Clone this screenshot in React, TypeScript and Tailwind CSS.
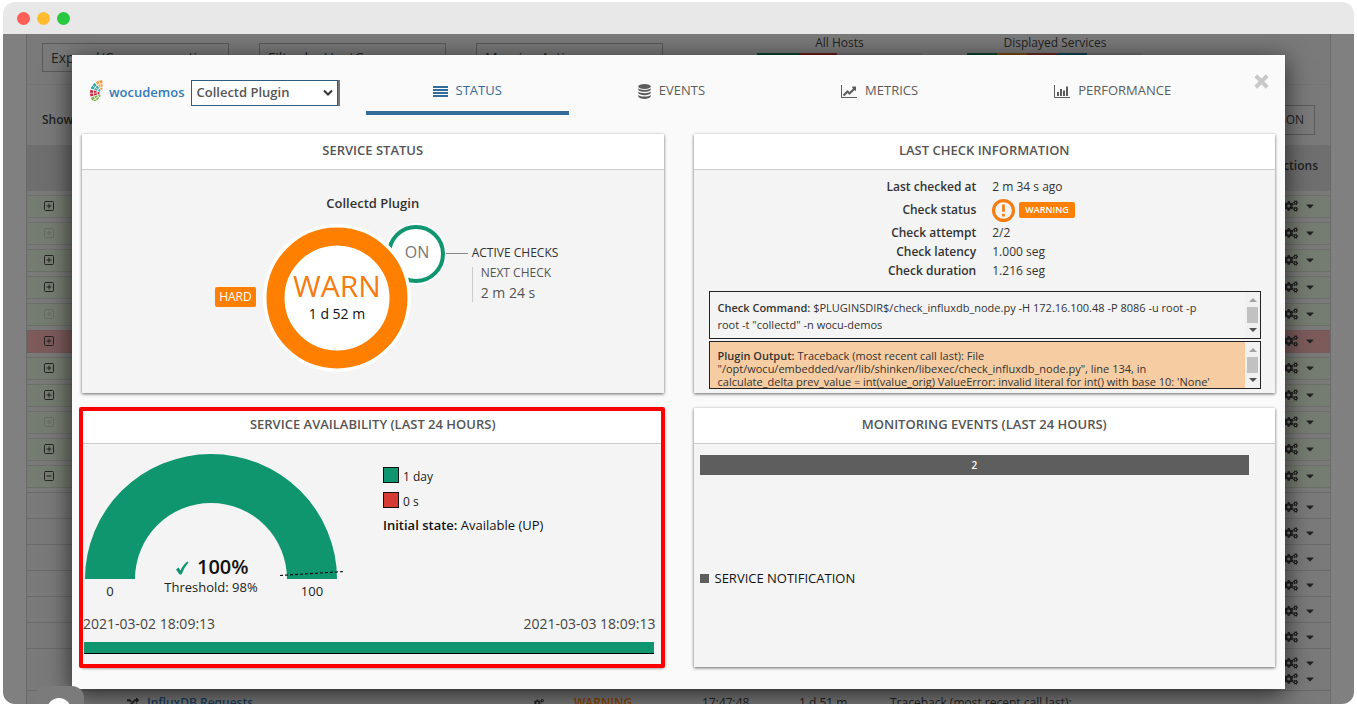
import React, { useState } from "react";
import { FaCaretDown, FaCogs, FaRandom } from "react-icons/fa";
import { LuSquareMinus, LuSquarePlus } from "react-icons/lu";

type RowState = "ok" | "muted" | "critical" | "open";

const HOST_ROWS: RowState[] = [
  "ok",
  "muted",
  "ok",
  "ok",
  "muted",
  "critical",
  "ok",
  "ok",
  "muted",
  "ok",
  "open",
];

const TABS = ["STATUS", "EVENTS", "METRICS", "PERFORMANCE"];

const CHECK_INFO = [
  { label: "Check attempt", value: "2/2" },
  { label: "Check latency", value: "1.000 seg" },
  { label: "Check duration", value: "1.216 seg" },
];

// Start angle of each logo sector, clockwise from 3 o'clock
const LOGO_SECTORS = [
  { color: "#7ab648", start: 128 },
  { color: "#c9283e", start: 164 },
  { color: "#2aa5a8", start: 200 },
  { color: "#f0a04b", start: 236 },
];

export default function App() {
  return (
    <div className="h-screen overflow-hidden bg-white px-[3px] py-0.5 font-['Open_Sans','Noto_Sans',sans-serif]">
      <div className="flex h-full flex-col overflow-hidden rounded-xl">
        <div className="flex h-8 shrink-0 items-center gap-[7px] bg-[#e8e8e8] px-[14px]">
          <span className="size-[13px] rounded-full bg-[#ff5f57]" />
          <span className="size-[13px] rounded-full bg-[#febc2e]" />
          <span className="size-[13px] rounded-full bg-[#28c840]" />
        </div>
        <div className="relative min-h-0 flex-1 overflow-hidden bg-[#808080] px-[23px]">
          <HostList />
          <ServiceModal />
          {/* Floating chat button, cut off by the window */}
          <div className="absolute -bottom-8 left-[31px] flex h-[50px] w-[50px] justify-center rounded-xl bg-[#7b7b7b] pt-3">
            <span className="size-6 rounded-full bg-white" />
          </div>
        </div>
      </div>
    </div>
  );
}

/** The dimmed page behind the modal. */
function HostList() {
  return (
    <div className="h-[760px] border-x border-[#6a6a6a] bg-[#7a7a7a] text-[#222]">
      <div className="flex h-[51px] items-start border-b border-[#757575] px-[15px] pt-[9px]">
        <div className="flex gap-[30px]">
          <FilterSelect label="Expand/Compress actions" />
          <FilterSelect label="Filter by HostGroup" />
          <FilterSelect label="Massive Actions" />
        </div>
        <div className="-mt-[9px] ml-[94px] w-[165px] text-center text-xs">
          <p className="h-[19px] leading-[17px]">All Hosts</p>
          <div className="flex h-1">
            <span className="w-[43px] bg-[#06482f]" />
            <span className="w-[37px] bg-[#6b1a17]" />
            <span className="flex-1 bg-[#6f6f6f]" />
          </div>
        </div>
        <div className="-mt-[9px] ml-[45px] w-[176px] text-center text-xs">
          <p className="h-[19px] leading-[17px]">Displayed Services</p>
          <div className="flex h-1">
            <span className="w-[30px] bg-[#06482f]" />
            <span className="w-[30px] bg-[#7f4a10]" />
            <span className="w-[30px] bg-[#6b2a27]" />
            <span className="w-[30px] bg-[#0d4358]" />
            <span className="flex-1 bg-[#6f6f6f]" />
          </div>
        </div>
      </div>

      <div className="flex h-[56px] items-center justify-between px-[15px] pt-[14px]">
        <span className="text-xs font-semibold">Show</span>
        <button
          type="button"
          className="h-[30px] border border-[#5a5a5a] px-2.5 text-xs"
        >
          JSON
        </button>
      </div>

      <table className="w-full border-separate border-spacing-x-0 border-spacing-y-1">
        <thead>
          <tr className="h-[46px] bg-[#6f6f6f] text-xs">
            <th className="w-[45px]" />
            <th className="pb-1 pr-3 text-right align-middle font-semibold">
              Actions
            </th>
          </tr>
        </thead>
        <tbody>
          {HOST_ROWS.map((state, i) => (
            <HostRow key={i} state={state} />
          ))}
        </tbody>
      </table>

      <table className="w-full border-collapse text-xs">
        <tbody>
          {[0, 1, 2, 3, 4, 5].map((i) => (
            <tr key={i} className="h-[26px] border-t border-[#6a6a6a]">
              <td colSpan={8} className="pt-0.5">
                <ActionsMenu />
              </td>
            </tr>
          ))}
          <tr className="h-[42px] border-t border-[#6a6a6a]">
            <td colSpan={8} className="pt-0.5">
              <div className="flex flex-col gap-0.5">
                <ActionsMenu />
                <ActionsMenu />
              </div>
            </td>
          </tr>
          <tr className="h-6 border-t border-[#6a6a6a]">
            <td className="w-[100px]" />
            <td className="w-5">
              <FaRandom className="size-3" />
            </td>
            <td className="w-[387px] font-semibold text-[#1b3f5f]">
              InfluxDB Requests
            </td>
            <td className="w-10">
              <FaCogs className="size-2.5" />
            </td>
            <td className="w-32 font-semibold text-[#8a4500]">WARNING</td>
            <td className="w-[97px]">17:47:48</td>
            <td className="w-[91px]">1 d 51 m</td>
            <td>Traceback (most recent call last):</td>
          </tr>
        </tbody>
      </table>
    </div>
  );
}

function FilterSelect({ label }: { label: string }) {
  return (
    <select
      aria-label={label}
      className="h-[29px] w-[187px] appearance-none border border-[#5a5a5a] px-2 text-sm"
    >
      <option>{label}</option>
    </select>
  );
}

function HostRow({ state }: { state: RowState }) {
  const critical = state === "critical";
  const cell = critical
    ? "border-y border-[#755a5a] bg-[#7d5b5b] pb-0.5"
    : "border-y border-[#6b7068] bg-[#757c71] pb-0.5";
  return (
    <tr className="h-[23px]">
      <td className={`${cell} pl-4`}>
        {state === "open" ? (
          <LuSquareMinus className="size-3" />
        ) : (
          <LuSquarePlus
            className={
              state === "muted" ? "size-3 text-[#676c64]" : "size-3"
            }
          />
        )}
      </td>
      <td className={cell}>
        <ActionsMenu />
      </td>
    </tr>
  );
}

function ActionsMenu() {
  return (
    <button
      type="button"
      aria-label="Actions"
      className="ml-auto flex items-center gap-1.5 pr-[14px]"
    >
      <FaCogs className="size-3.5" />
      <FaCaretDown className="size-3" />
    </button>
  );
}

function ServiceModal() {
  const [tab, setTab] = useState("STATUS");

  return (
    <div
      role="dialog"
      aria-label="Collectd Plugin"
      className="absolute inset-x-[69px] top-[21px] bg-[#fafafa] px-2.5 pb-[22px] shadow-[0_5px_24px_rgba(0,0,0,0.7)]"
    >
      <div className="flex h-[79px] items-start">
        <div className="flex items-center pl-[7px] pt-6">
          <WocuLogo />
          <a href="#" className="ml-1 text-[13px] font-semibold text-[#337ab7]">
            wocudemos
          </a>
          <div className="relative ml-1.5">
            <select
              aria-label="Service"
              className="h-[26px] w-[147px] appearance-none border border-[#2f5b80] bg-white px-[5px] text-[13px] font-semibold text-[#555] shadow-[2px_0_0_#777]"
            >
              <option>Collectd Plugin</option>
            </select>
            <svg
              className="pointer-events-none absolute right-1 top-2.5 h-2 w-3"
              viewBox="0 0 12 8"
              fill="none"
              stroke="#333"
              strokeWidth="2"
            >
              <path d="M2 1.5 6 5.5 10 1.5" />
            </svg>
          </div>
        </div>

        <nav className="ml-7 flex gap-0.5">
          {TABS.map((name) => (
            <button
              key={name}
              type="button"
              onClick={() => setTab(name)}
              className={
                tab === name
                  ? "flex h-[60px] items-center gap-2 border-b-4 border-[#336b9b] px-[67px] pt-4 text-[13px] text-[#336b9b]"
                  : "flex h-[60px] items-center gap-2 border-b-4 border-transparent px-[67px] pt-4 text-[13px] text-[#5c5c5c]"
              }
            >
              <TabIcon name={name} />
              {name}
            </button>
          ))}
        </nav>

        <button type="button" aria-label="Close" className="ml-auto pr-1.5 pt-[19px]">
          <svg
            className="size-[15px]"
            viewBox="0 0 15 15"
            stroke="#c8c8c8"
            strokeWidth="4"
            strokeLinecap="square"
          >
            <path d="M3.2 3.2 11.8 11.8M11.8 3.2 3.2 11.8" />
          </svg>
        </button>
      </div>

      <div className="grid grid-cols-2 gap-x-[30px] gap-y-[15px]">
        <Panel title="SERVICE STATUS">
          <ServiceStatus />
        </Panel>
        <Panel title="LAST CHECK INFORMATION">
          <LastCheck />
        </Panel>
        <Panel title="SERVICE AVAILABILITY (LAST 24 HOURS)" highlighted>
          <Availability />
        </Panel>
        <Panel title="MONITORING EVENTS (LAST 24 HOURS)">
          <MonitoringEvents />
        </Panel>
      </div>
    </div>
  );
}

function Panel({
  title,
  highlighted,
  children,
}: {
  title: string;
  highlighted?: boolean;
  children: React.ReactNode;
}) {
  return (
    <section className="relative h-[259px] bg-[#f4f4f4] shadow-[0_1px_3px_rgba(0,0,0,0.6)]">
      <h2 className="h-9 border-b border-[#ccc] bg-white text-center text-[13px] font-semibold leading-[33px] text-[#555]">
        {title}
      </h2>
      {children}
      {highlighted && (
        <div className="pointer-events-none absolute -bottom-px -left-[3px] -right-px -top-px rounded-xs border-4 border-[#f00]" />
      )}
    </section>
  );
}

function ServiceStatus() {
  return (
    <div className="pt-[22px]">
      <h3 className="text-center text-[13px] font-semibold leading-[22px] text-[#333]">
        Collectd Plugin
      </h3>
      <div className="mt-2 flex justify-center pl-7">
        <span className="mt-[65px] h-5 rounded-xs bg-[#ff8000] px-1 text-xs leading-5 text-white">
          HARD
        </span>
        <svg className="ml-1.5 h-[152px] w-[184px]" viewBox="0 0 184 152">
          <circle cx="154" cy="32" r="31" fill="#fff" />
          <circle
            cx="154"
            cy="32"
            r="27"
            fill="#fff"
            stroke="#0f966f"
            strokeWidth="4"
          />
          <circle cx="75" cy="76" r="74" fill="#fff" />
          <circle
            cx="75"
            cy="76"
            r="61.5"
            fill="#fff"
            stroke="#ff8000"
            strokeWidth="18"
          />
          <text x="155" y="36" textAnchor="middle" fontSize="16" fill="#777">
            ON
          </text>
          <text x="75" y="75" textAnchor="middle" fontSize="30" fill="#f57c10">
            WARN
          </text>
          <text x="75" y="97" textAnchor="middle" fontSize="14" fill="#111">
            1 d 52 m
          </text>
        </svg>
        <div className="flex pt-[21px]">
          <span className="mt-2.5 h-px w-[22px] bg-[#888]" />
          <div className="ml-1 text-xs leading-5 text-[#333]">
            ACTIVE CHECKS
            <div className="mt-1 h-[35px] border-l border-[#ccc] pl-2 text-[#555]">
              <p className="leading-3">NEXT CHECK</p>
              <p className="mt-1 text-sm">2 m 24 s</p>
            </div>
          </div>
        </div>
      </div>
    </div>
  );
}

function LastCheck() {
  return (
    <div>
      <dl className="grid grid-cols-2 gap-x-4 pt-[7px] text-[#333]">
        <dt className="text-right text-xs font-semibold leading-5">
          Last checked at
        </dt>
        <dd className="text-xs leading-5">2 m 34 s ago</dd>
        <dt className="text-right text-xs font-semibold leading-[26px]">
          Check status
        </dt>
        <dd className="flex items-center gap-1">
          <svg className="size-[23px]" viewBox="0 0 22 22" fill="none">
            <circle cx="11" cy="11" r="9.5" stroke="#f57c10" strokeWidth="3" />
            <path
              d="M11 5.2v7M11 14.2v2.6"
              stroke="#f57c10"
              strokeWidth="2.6"
            />
          </svg>
          <span className="rounded-xs bg-[#ff8000] px-1.5 text-[9px] font-semibold leading-4 text-white">
            WARNING
          </span>
        </dd>
        {CHECK_INFO.map((item) => (
          <React.Fragment key={item.label}>
            <dt className="text-right text-xs font-semibold leading-[19px]">
              {item.label}
            </dt>
            <dd className="text-xs leading-[19px]">{item.value}</dd>
          </React.Fragment>
        ))}
      </dl>

      <div className="mt-[11px] flex flex-col gap-0.5 pl-[15px] pr-[14px]">
        <OutputBox>
          <div className="flex-1 pl-2 pr-8 pt-[7px] text-[11px] leading-[17px]">
            <b className="font-semibold">Check Command:</b>{" "}
            $PLUGINSDIR$/check_influxdb_node.py -H 172.16.100.48 -P 8086 -u root
            -p root -t "collectd" -n wocu-demos
          </div>
        </OutputBox>
        <OutputBox>
          <div className="flex-1 bg-[#f6cda3] pl-2 pr-8 pt-[7px] text-[11px] leading-[13px]">
            <b className="font-semibold">Plugin Output:</b> Traceback (most
            recent call last): File
            "/opt/wocu/embedded/var/lib/shinken/libexec/check_influxdb_node.py",
            line 134, in calculate_delta prev_value = int(value_orig)
            ValueError: invalid literal for int() with base 10: 'None'
          </div>
        </OutputBox>
      </div>
    </div>
  );
}

function OutputBox({ children }: { children: React.ReactNode }) {
  return (
    <div className="flex h-12 overflow-hidden border border-[#222] text-[#333]">
      {children}
      <div className="flex w-[15px] shrink-0 flex-col items-center bg-[#f1f1f1] pt-1.5">
        <svg className="h-1 w-2" viewBox="0 0 8 4">
          <path d="M4 0 8 4H0z" fill="#a3a3a3" />
        </svg>
        <span className="mt-[5px] h-4 w-[11px] bg-[#c1c1c1]" />
        <svg className="mt-[5px] h-1 w-2" viewBox="0 0 8 4">
          <path d="M0 0H8L4 4z" fill="#505050" />
        </svg>
      </div>
    </div>
  );
}

function Availability() {
  return (
    <div className="pt-2.5">
      <div className="flex">
        <svg className="h-[150px] w-[265px]" viewBox="0 0 265 150">
          <path
            d="M3 125a126 125 0 0 1 252 0h-50a76 76 0 0 0-152 0z"
            fill="#0f966f"
          />
          <path
            d="M198 121.5 262 117.5"
            stroke="#111"
            strokeWidth="1.2"
            strokeDasharray="3 2"
          />
          <path
            d="M94 115.5 96.5 113.5 98.5 116.5Q101 110.5 105.5 107.5L106.5 108.5Q102 113.5 99.5 120.5L97.5 120.5Z"
            fill="#0f966f"
          />
          <text x="115" y="120" fontSize="20" fontWeight="600" fill="#111">
            100%
          </text>
          <text x="129" y="138" textAnchor="middle" fontSize="13" fill="#222">
            Threshold: 98%
          </text>
          <text x="28" y="142" textAnchor="middle" fontSize="13" fill="#222">
            0
          </text>
          <text x="230" y="142" textAnchor="middle" fontSize="13" fill="#222">
            100
          </text>
        </svg>
        <div className="ml-9 pt-[13px] text-[#222]">
          <div className="flex h-[25px] items-start gap-1 text-xs leading-5">
            <span className="size-4 border border-[#111] bg-[#0f966f]" />
            1 day
          </div>
          <div className="flex h-[25px] items-start gap-1 text-xs leading-5">
            <span className="size-4 border border-[#111] bg-[#d43c33]" />0 s
          </div>
          <p className="text-[13px] leading-4 text-[#111]">
            <b className="font-semibold">Initial state:</b> Available (UP)
          </p>
        </div>
      </div>
      <div className="mt-[10px] flex justify-between pl-px pr-2 text-sm leading-5 text-[#444]">
        <span>2021-03-02 18:09:13</span>
        <span>2021-03-03 18:09:13</span>
      </div>
      <div className="ml-0.5 mr-2.5 mt-2 h-3 border-b border-black bg-[#0f966f]" />
    </div>
  );
}

function MonitoringEvents() {
  return (
    <div className="pl-1.5 pr-[26px] pt-[11px]">
      <div className="h-5 bg-[#5e5e5e] text-center text-[10px] font-semibold leading-5 text-white">
        2
      </div>
      <div className="mt-[93px] flex items-center gap-1.5 text-[13px] leading-5 text-[#111]">
        <span className="size-[9px] bg-[#5e5e5e]" />
        SERVICE NOTIFICATION
      </div>
    </div>
  );
}

/** Fan of coloured petals in three rings. */
function WocuLogo() {
  return (
    <svg
      className="-mt-1 h-[21px] w-4"
      viewBox="1 0 16 21"
      fill="none"
      strokeWidth="3"
    >
      {LOGO_SECTORS.map(({ color, start }) => (
        <g key={color} stroke={color} transform={`rotate(${start} 15 13)`}>
          <circle
            cx="15"
            cy="13"
            r="11.5"
            pathLength="360"
            strokeDasharray="14 3 14 329"
          />
          <circle
            cx="15"
            cy="13"
            r="7.8"
            pathLength="360"
            strokeDasharray="13 5 13 329"
          />
          <circle
            cx="15"
            cy="13"
            r="4.5"
            strokeWidth="2"
            pathLength="360"
            strokeDasharray="28 332"
          />
        </g>
      ))}
    </svg>
  );
}

function TabIcon({ name }: { name: string }) {
  if (name === "STATUS") {
    return (
      <svg className="size-[15px]" viewBox="0 0 15 15" fill="currentColor">
        <path d="M0 2h15v2H0zM0 5h15v2H0zM0 8h15v2H0zM0 11h15v2H0z" />
      </svg>
    );
  }
  if (name === "EVENTS") {
    return (
      <svg className="h-[15px] w-[13px]" viewBox="0 0 13 15" fill="currentColor">
        <ellipse cx="6.5" cy="2.5" rx="6.2" ry="2.5" />
        <path d="M.3 4.3c2 2.2 10.4 2.2 12.4 0v1.5c-1 2.7-11.4 2.7-12.4 0z" />
        <path d="M.3 7.6c2 2.2 10.4 2.2 12.4 0v1.5c-1 2.7-11.4 2.7-12.4 0z" />
        <path d="M.3 10.9c2 2.2 10.4 2.2 12.4 0v1.6c-1 3.2-11.4 3.2-12.4 0z" />
      </svg>
    );
  }
  if (name === "METRICS") {
    return (
      <svg
        className="h-[13px] w-4"
        viewBox="0 0 2048 1664"
        fill="currentColor"
      >
        <path d="M2048 1536v128H0V0h128v1536h1920zM1920 288v435q0 21-19.5 29.5T1865 745l-121-121-633 633q-10 10-23 10t-23-10l-233-233-416 416-192-192 585-585q10-10 23-10t23 10l233 233 464-464-121-121q-16-16-7.5-35.5T1454 180h435q14 0 23 9t8 99z" />
      </svg>
    );
  }
  return (
    <svg className="h-[13px] w-4" viewBox="0 0 16 13" fill="currentColor">
      <path d="M0 0h1v12h15v1H0zM3 7h2v4H3zM6 4h2v7H6zM9 5.5h2V11H9zM12 1.5h2V11h-2z" />
    </svg>
  );
}
